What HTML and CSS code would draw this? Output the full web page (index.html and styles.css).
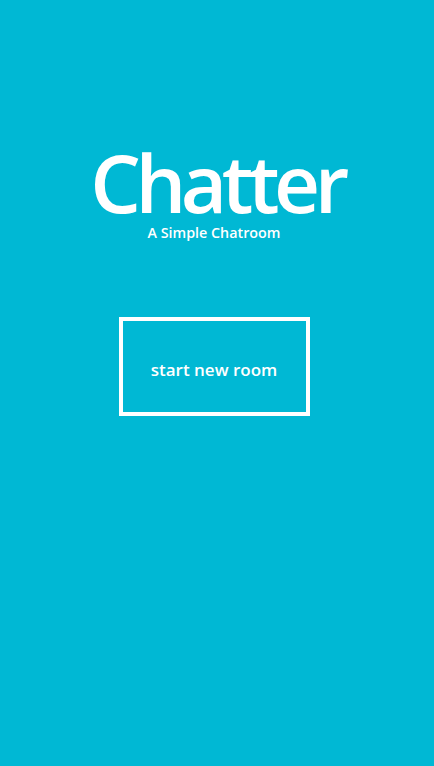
FILE: index.html
```html
<!DOCTYPE html>
<html>
<head>
<meta charset="utf-8">
<link rel="stylesheet" href="styles.css">
</head>
<body>
<main class="page">
  <header class="brand">
    <h1 class="title">Chatter</h1>
    <p class="subtitle">A Simple Chatroom</p>
  </header>
  <button class="start">start new room</button>
</main>
</body>
</html>
```
FILE: styles.css
```css
html, body {
  margin: 0;
  padding: 0;
  height: 100%;
  background: #00b8d4;
}
.page {
  display: flex;
  flex-direction: column;
  align-items: center;
  font-family: "Open Sans", "Noto Sans", sans-serif;
  color: #fff;
  padding: 142px 6px 0 0;
}
.brand {
  display: flex;
  flex-direction: column;
  align-items: center;
}
.title {
  margin: 0 0 0 6px;
  font-size: 80px;
  font-weight: 600;
  line-height: 80px;
  letter-spacing: -5.5px;
}
.subtitle {
  margin: 3px 0 0;
  font-size: 14.3px;
  font-weight: 600;
  line-height: 16px;
}
.start {
  margin-top: 76px;
  width: 191px;
  height: 99px;
  box-sizing: border-box;
  border: 4px solid #fff;
  background: transparent;
  color: #fff;
  font-family: "Open Sans", "Noto Sans", sans-serif;
  font-size: 17px;
  font-weight: 600;
  padding: 6px 0 0;
}
```
